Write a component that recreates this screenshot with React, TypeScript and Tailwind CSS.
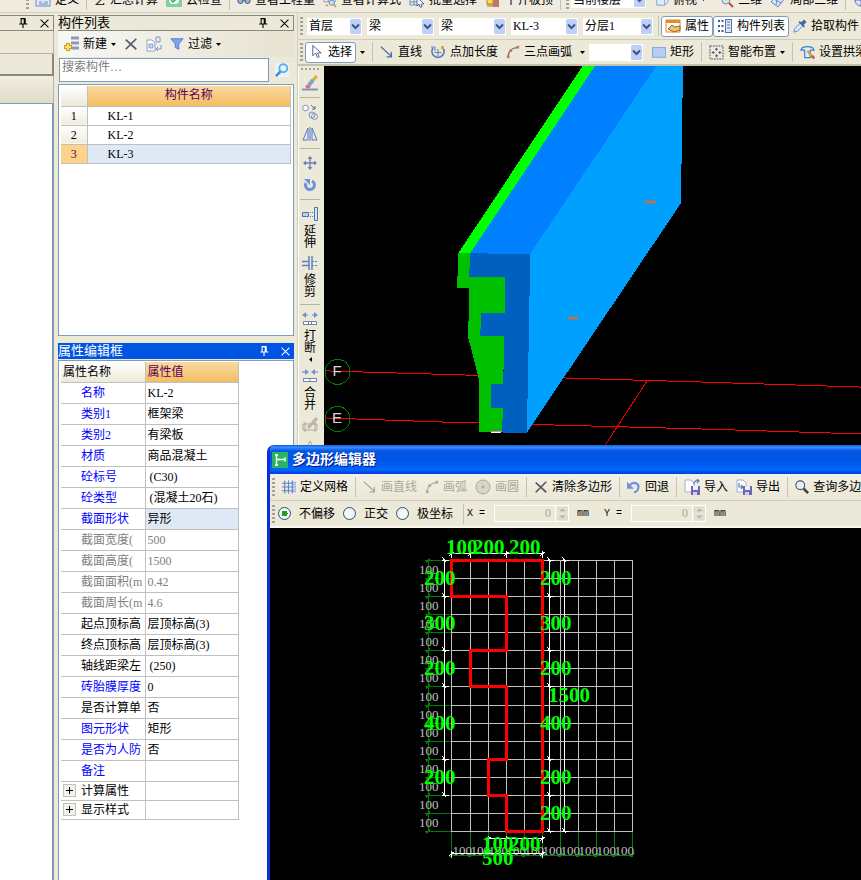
import React from 'react';
import clsx from 'clsx';

interface IconProps {
  children: React.ReactNode;
  className?: string;
}

const Icon = ({ children, className = 'w-4 h-4' }: IconProps) => (
  <svg viewBox="0 0 16 16" className={clsx('shrink-0', className)} fill="none" aria-hidden="true">
    {children}
  </svg>
);

const BLUE = '#4a6ea9';
const GREY = '#aca899';

const LineIcon = ({ color = BLUE }: { color?: string }) => (
  <Icon className="w-[14px] h-4">
    <path d="M1 2l12 11M13 8v5.500H7.500" stroke={color} strokeWidth="1.500" />
  </Icon>
);

const ArcIcon = ({ color = BLUE, dot = '#e06a4c' }: { color?: string; dot?: string }) => (
  <Icon className="w-[14px] h-4">
    <path d="M2.500 13C3 7 7 3 13 3" stroke={color} strokeWidth="1.500" />
    <rect x="1" y="12" width="3" height="3" fill={dot} />
    <rect x="4" y="5" width="3" height="3" fill={dot} />
    <rect x="12" y="1" width="3" height="3" fill={dot} />
  </Icon>
);

const CrossIcon = () => (
  <Icon className="w-[14px] h-4">
    <path d="M2 3l12 11M14 2L2 14" stroke="#5c5c68" strokeWidth="2" />
  </Icon>
);

const FloppyIcon = ({ out = false }: { out?: boolean }) => (
  <Icon>
    <path d="M1 1h6l3 3v9H1z" fill="#fff" stroke="#9fb0cc" />
    <path d={out ? 'M3 4v4h4M5 6l2 2-2 2' : 'M10 5c0-3 2-4 5-3M13 0l2 2-2 2'} stroke="#5a7ab8" strokeWidth="1.200" />
    <rect x="7" y="7" width="9" height="9" fill="#7266b4" />
    <rect x="9" y="7" width="5" height="4" fill="#eef" />
    <rect x="9" y="13" width="4" height="3" fill="#cfcbe8" />
  </Icon>
);

const PinIcon = () => (
  <Icon className="w-[10px] h-[10px]">
    <path d="M4 1h8M5 1v8M10 1v8M11.500 1v8M2 9.500h13M8 10v6" stroke="currentColor" strokeWidth="1.800" />
  </Icon>
);

const CloseIcon = () => (
  <Icon className="w-[9px] h-[9px]">
    <path d="M1 1l14 14M15 1L1 15" stroke="currentColor" strokeWidth="1.800" />
  </Icon>
);

const Caret = () => (
  <svg viewBox="0 0 5 3" className="w-[5px] h-[3px] shrink-0" aria-hidden="true">
    <path d="M0 0h5L2.500 3z" fill="#000" />
  </svg>
);

const Grip = () => (
  <span className="w-[3px] h-[18px] mx-[2px] shrink-0 bg-[repeating-linear-gradient(#a5a294_0_2px,transparent_2px_4px)]" />
);

const Separator = () => <span className="w-px h-5 mx-[3px] shrink-0 bg-[#c5c2b2]" />;

interface ToolButtonProps {
  icon: React.ReactNode;
  label?: string;
  menu?: boolean;
  disabled?: boolean;
  active?: boolean;
}

const ToolButton = ({ icon, label, menu, disabled, active }: ToolButtonProps) => (
  <button
    type="button"
    disabled={disabled}
    className={clsx(
      'flex items-center gap-1 shrink-0 whitespace-nowrap h-[21px]',
      active ? 'px-[3px] bg-white border border-[#7f9db9] rounded-[3px]' : 'px-1',
      disabled && 'text-[#aca899]',
    )}
  >
    {icon}
    {label}
    {menu && <Caret />}
  </button>
);

const DropDown = ({ value, label, className }: { value: string; label: string; className: string }) => (
  <span className={clsx('flex items-center shrink-0 h-[17px] bg-white mr-[5px]', className)}>
    <select aria-label={label} className="appearance-none flex-1 min-w-0 h-full pl-[2px] outline-none">
      <option>{value}</option>
    </select>
    <svg viewBox="0 0 11 15" className="w-[11px] h-[15px] shrink-0 mr-px" aria-hidden="true">
      <rect width="11" height="15" rx="1.500" fill="#bfd0f8" />
      <path d="M2 5.500l3.500 3.500L9 5.500" fill="none" stroke="#3f5480" strokeWidth="2" />
    </svg>
  </span>
);

const TopToolbar = () => (
  <header className="h-[13px] shrink-0 overflow-hidden flex items-end border-b border-[#d0cdbf]">
    <div className="h-[25px] shrink-0 flex items-center pl-6 bg-[#efecdf] min-w-full">
      <Grip />
      <ToolButton label="定义" icon={<Icon><rect x="1" y="2" width="14" height="12" fill="#dfe9fb" stroke="#6d8bc0" /><path d="M4 10h3M9 10h4M4 12h9" stroke="#6d8bc0" /></Icon>} />
      <Separator />
      <ToolButton label="汇总计算" icon={<Icon className="w-3 h-4"><path d="M13 4V2H3l6 6-6 6h10v-2" stroke="#333" strokeWidth="1.500" /></Icon>} />
      <ToolButton label="云检查" icon={<Icon><rect width="16" height="15" rx="1" fill="#7fcf9f" /><rect x="3" y="3" width="10" height="9" rx="4" fill="#f2fff6" /><path d="M5 8l2 2 4-4" stroke="#3aa765" strokeWidth="1.500" /></Icon>} />
      <Separator />
      <ToolButton label="查看工程量" icon={<Icon className="w-[14px] h-4"><circle cx="4" cy="9" r="3" fill="#9db5dd" stroke="#33456b" /><circle cx="12" cy="9" r="3" fill="#9db5dd" stroke="#33456b" /><path d="M6 8h4" stroke="#33456b" /></Icon>} />
      <ToolButton label="查看计算式" icon={<Icon className="w-[14px] h-4"><path d="M1 2h13v8H1zM1 6h13M6 2v8" stroke="#7d93bf" /><circle cx="10" cy="11" r="3" fill="#bfe0f8" stroke="#5a85b8" /><path d="M12 13l3 3M3 14h3" stroke="#d5954a" strokeWidth="2" /></Icon>} />
      <ToolButton label="批量选择" icon={<Icon><path d="M1 2h10v11H1zM1 6h10M1 10h10M5 2v11" stroke="#6d8bc0" /><path d="M8 5l7 7-3 0 1 3-2 0-1-3-2 2z" fill="#fff" stroke="#4a6ea9" /></Icon>} />
      <ToolButton label="平齐板顶" icon={<Icon><path d="M2 8h12v7H2z" fill="#d9a08a" /><path d="M9 8v7M11 6v9M13 7v8" stroke="#a5503a" /><rect x="2" y="5" width="6" height="7" fill="#ffd659" stroke="#b28b1e" /></Icon>} />
      <Separator />
      <Grip />
      <DropDown value="当前楼层" label="楼层范围" className="w-[75px]" />
      <ToolButton label="俯视" menu icon={<Icon className="w-[14px] h-4"><path d="M2 5l4-3h9v8l-4 4H2zM2 5h9v9M11 5l4-3" fill="#dcecf8" stroke="#7f9fc4" /></Icon>} />
      <span className="w-1 shrink-0" />
      <ToolButton label="三维" icon={<Icon><path d="M1 3l7 6 6-5" stroke="#49a764" strokeWidth="2" /><circle cx="8" cy="8" r="4" fill="#cfe9e0" stroke="#6f93a8" /><path d="M11 11l4 4" stroke="#b34d3d" strokeWidth="2" /></Icon>} />
      <ToolButton label="局部三维" icon={<Icon><path d="M1 10l7-8 7 4-7 9zM4 7l7 4M8 2l-2 11" fill="#d2e4f7" stroke="#6d8bc0" /></Icon>} />
      <Separator />
      <ToolButton icon={<Icon><circle cx="8" cy="8" r="6" fill="#dfe5fa" stroke="#5b6fb5" /><path d="M8 2v12M2 8h12" stroke="#5b6fb5" /></Icon>} />
    </div>
  </header>
);

const PanelTitle = ({ title, active }: { title?: string; active?: boolean }) => (
  <div
    className={clsx(
      'flex items-center h-4 shrink-0 text-[13px] leading-4 pr-1 gap-3',
      active ? 'bg-[#0054e3] text-white' : 'border border-l-0 border-[#8b887b] bg-[#ece9d8]',
    )}
  >
    <h2 className="flex-1 whitespace-nowrap">{title}</h2>
    <button type="button" aria-label="固定"><PinIcon /></button>
    <button type="button" aria-label="关闭"><CloseIcon /></button>
  </div>
);

const NavPanel = () => (
  <aside className="w-[54px] shrink-0 flex flex-col pt-[2px]">
    <PanelTitle />
    <div className="h-[23px] shrink-0 border-b border-r border-[#b5b2a3]" />
    <div className="h-[22px] shrink-0 border-b-2 border-r-2 border-[#8b887b]" />
    <div className="h-[27px] shrink-0 bg-gradient-to-b from-[#f1eee2] to-[#dfdbc8] border-r border-[#b5b2a3]" />
    <div className="flex-1 bg-white border-t border-r-2 border-[#7f9db9]" />
  </aside>
);

const MEMBERS = ['KL-1', 'KL-2', 'KL-3'];

const MemberList = () => (
  <section className="shrink-0">
    <PanelTitle title="构件列表" />
    <div className="flex items-center h-[26px] pl-[1px] bg-gradient-to-r from-[#f7f7f4] to-[#e7e3d2]">
      <ToolButton label="新建" menu icon={<Icon><path d="M8 2h8M8 7h8M8 12h8" stroke="#8a9bb8" strokeWidth="3" /><path d="M5 7v8M1 11h8" stroke="#c89a2b" strokeWidth="4" /><path d="M5 8v6M2 11h6" stroke="#ffe26e" strokeWidth="2" /></Icon>} />
      <ToolButton icon={<CrossIcon />} />
      <ToolButton icon={<Icon className="w-4 h-4"><path d="M1 4h5l3 3v8H1z" fill="#fff" stroke="#8aa0c8" /><path d="M3 8h4v4H3z" fill="#c7d3ea" stroke="#8aa0c8" /><path d="M10 1h4v5h-4zM15 9v4h-5M12 11l-2 2 2 2" stroke="#7a90d0" /></Icon>} />
      <ToolButton label="过滤" menu icon={<Icon className="w-[14px] h-4"><path d="M1 2h14l-5 6v6l-4-2V8z" fill="#7fa5ea" stroke="#4a78cf" /></Icon>} />
    </div>
    <div className="flex items-center gap-[6px] h-[25px] pl-px">
      <input
        aria-label="搜索构件"
        placeholder="搜索构件…"
        className="w-[210px] h-6 px-[2px] pb-1 bg-white border border-[#7f9db9] outline-none placeholder:text-[#808080]"
      />
      <button type="button" aria-label="搜索">
        <Icon className="w-[14px] h-[14px]"><rect width="16" height="16" fill="#eaf4fb" /><circle cx="9.500" cy="6" r="4.500" stroke="#5ab0ea" strokeWidth="2.200" /><path d="M6 10l-5 5" stroke="#3c8fd8" strokeWidth="3" /></Icon>
      </button>
    </div>
    <div className="h-[252px] mt-[2px] px-[2px] pt-px bg-white border border-[#7f9db9]">
      <table className="w-full table-fixed border-collapse">
        <thead>
          <tr className="h-5 leading-[15px]">
            <th className="w-[26px] p-0 bg-gradient-to-b from-white to-[#ece9d8] border-r border-b border-[#c0c0c0]" />
            <th className="p-0 font-normal text-[#5b005b] bg-gradient-to-b from-[#f9d9a0] to-[#f3bd60] border-r border-b border-[#c0c0c0]">构件名称</th>
          </tr>
        </thead>
        <tbody>
          {MEMBERS.map((name, i) => {
            const selected = i === 2;
            return (
              <tr key={name} className={clsx('h-[19px]', selected && 'bg-[#dfe8f5]')}>
                <td
                  className={clsx(
                    'p-0 text-center border-r border-b border-[#c0c0c0]',
                    selected ? 'bg-[#ffd28a] text-[#5b005b]' : 'bg-gradient-to-b from-white to-[#efede0]',
                  )}
                >
                  {i + 1}
                </td>
                <td className="p-0 pl-5 border-r border-b border-[#c0c0c0]">{name}</td>
              </tr>
            );
          })}
        </tbody>
      </table>
    </div>
  </section>
);

type Tone = 'blue' | 'black' | 'grey';

const PROPERTIES: { name: string; value: string; tone: Tone }[] = [
  { name: '名称', value: 'KL-2', tone: 'blue' },
  { name: '类别1', value: '框架梁', tone: 'blue' },
  { name: '类别2', value: '有梁板', tone: 'blue' },
  { name: '材质', value: '商品混凝土', tone: 'blue' },
  { name: '砼标号', value: '(C30)', tone: 'blue' },
  { name: '砼类型', value: '(混凝土20石)', tone: 'blue' },
  { name: '截面形状', value: '异形', tone: 'blue' },
  { name: '截面宽度(', value: '500', tone: 'grey' },
  { name: '截面高度(', value: '1500', tone: 'grey' },
  { name: '截面面积(m', value: '0.42', tone: 'grey' },
  { name: '截面周长(m', value: '4.6', tone: 'grey' },
  { name: '起点顶标高', value: '层顶标高(3)', tone: 'black' },
  { name: '终点顶标高', value: '层顶标高(3)', tone: 'black' },
  { name: '轴线距梁左', value: '(250)', tone: 'black' },
  { name: '砖胎膜厚度', value: '0', tone: 'blue' },
  { name: '是否计算单', value: '否', tone: 'black' },
  { name: '图元形状', value: '矩形', tone: 'blue' },
  { name: '是否为人防', value: '否', tone: 'blue' },
  { name: '备注', value: '', tone: 'blue' },
];

const GROUPS = ['计算属性', '显示样式'];

const PropertyEditor = () => (
  <section className="flex-1 min-h-0 flex flex-col mt-[7px]">
    <PanelTitle title="属性编辑框" active />
    <div className="flex-1 min-h-0 mt-px px-[2px] pt-px bg-white border border-b-0 border-[#7f9db9]">
      <table className="w-[178px] table-fixed border-collapse whitespace-nowrap">
        <thead>
          <tr className="h-5 text-left">
            <th className="w-[84px] p-0 pl-[2px] font-normal bg-gradient-to-b from-white to-[#ece9d8] border-r border-b border-[#c0c0c0]">属性名称</th>
            <th className="p-0 pl-[2px] font-normal text-[#5b005b] bg-gradient-to-b from-[#f9d9a0] to-[#f3bd60] border-r border-b border-[#c0c0c0]">属性值</th>
          </tr>
        </thead>
        <tbody>
          {PROPERTIES.map((p) => (
            <tr key={p.name} className="h-[21px]">
              <td
                className={clsx(
                  'p-0 pl-5 overflow-hidden border-r border-b border-[#c0c0c0]',
                  p.tone === 'blue' && 'text-[#0000ff]',
                  p.tone === 'grey' && 'text-[#808080]',
                )}
              >
                {p.name}
              </td>
              <td
                className={clsx(
                  'p-0 border-r border-b border-[#c0c0c0]',
                  p.value.startsWith('(') ? 'pl-1' : 'pl-[2px]',
                  p.tone === 'grey' && 'text-[#808080]',
                  p.value === '异形' && 'bg-[#dfe8f5]',
                )}
              >
                {p.value}
              </td>
            </tr>
          ))}
          {GROUPS.map((g) => (
            <tr key={g} className="h-[19px]">
              <td className="p-0 border-r border-b border-[#c0c0c0]">
                <span className="flex items-center gap-[5px] pl-[2px]">
                  <button type="button" aria-label={`展开${g}`} className="w-[13px] h-[13px] flex items-center justify-center border border-[#c0c0c0] bg-[#f3f3ee]">
                    <svg viewBox="0 0 7 7" className="w-[7px] h-[7px]"><path d="M3.500 0v7M0 3.500h7" stroke="#000" /></svg>
                  </button>
                  {g}
                </span>
              </td>
              <td className="p-0 border-r border-b border-[#c0c0c0]" />
            </tr>
          ))}
        </tbody>
      </table>
    </div>
  </section>
);

const MemberToolbar = () => (
  <div className="flex items-center h-[27px] shrink-0 overflow-hidden border-b border-[#d0cdbf]">
    <Grip />
    <span className="w-[2px] shrink-0" />
    <DropDown value="首层" label="楼层" className="w-[55px]" />
    <DropDown value="梁" label="构件类别" className="w-[67px]" />
    <DropDown value="梁" label="构件类型" className="w-[67px]" />
    <DropDown value="KL-3" label="构件" className="w-[67px]" />
    <DropDown value="分层1" label="分层" className="w-[70px]" />
    <span className="w-px h-5 mr-[2px] shrink-0 bg-[#c5c2b2]" />
    <ToolButton active label="属性" icon={<Icon><rect x="1" y="2" width="14" height="12" fill="#fff" stroke="#e08a2a" /><path d="M1 3.500h14" stroke="#e08a2a" strokeWidth="3" /><path d="M3 11l4-4 3 2 5-1v4l-6 2z" fill="#f3c069" stroke="#7a4b16" strokeWidth=".8" /></Icon>} />
    <ToolButton active label="构件列表" icon={<Icon><path d="M1 3h2M1 8h2M1 13h2M4.500 3h2M4.500 8h2M4.500 13h2" stroke="#3d5a99" strokeWidth="2" /><rect x="8.500" y="1.500" width="6" height="13" fill="#dbe6fb" stroke="#5673b0" /><path d="M10 4h3M10 7h3M10 10h3" stroke="#5673b0" /></Icon>} />
    <ToolButton label="拾取构件" icon={<Icon className="w-[14px] h-4"><path d="M1 15l1-4 7-7 3 3-7 7z" fill="#d7ebfa" stroke="#4c86c4" /><path d="M7 3l6 6" stroke="#3a6ba8" strokeWidth="2" /><path d="M10 6l4-4" stroke="#3a6ba8" strokeWidth="4" /></Icon>} />
  </div>
);

const DrawToolbar = () => (
  <div className="flex items-center h-[26px] shrink-0 overflow-hidden border-b-2 border-[#c5c2b2]">
    <Grip />
    <ToolButton active label="选择" icon={<Icon className="w-[15px] h-4"><path d="M4 1v11l3-3 2 5 2-1-2-4h4z" fill="#fff" stroke="#4a5f86" /></Icon>} />
    <button type="button" aria-label="选择方式" className="px-1"><Caret /></button>
    <Separator />
    <ToolButton label="直线" icon={<LineIcon />} />
    <ToolButton label="点加长度" icon={<Icon><path d="M3 4a6 6 0 1 0 10 0" stroke="#5b7fc0" strokeWidth="1.800" /><path d="M1 3h4v4M8 5v7M4.500 8.500h7" stroke="#5b7fc0" /><rect x="11" y="2" width="3" height="3" fill="#e0a04c" /></Icon>} />
    <ToolButton label="三点画弧" icon={<ArcIcon />} />
    <button type="button" aria-label="更多画弧" className="px-1"><Caret /></button>
    <DropDown value="" label="弧参数" className="w-[54px]" />
    <ToolButton label="矩形" icon={<Icon className="w-[14px] h-4"><rect x="0.500" y="3" width="15" height="11" fill="#b8cdf5" stroke="#7f9fd8" /></Icon>} />
    <Separator />
    <ToolButton label="智能布置" menu icon={<Icon className="w-[15px] h-[15px]"><rect x="1" y="1" width="14" height="14" stroke="#7b88a3" strokeWidth="1.500" strokeDasharray="2 1" /><path d="M8 3v3M6.500 4.500h3M8 10v3M6.500 11.500h3M3 8h3M4.500 6.500v3M10 8h3M11.500 6.500v3" stroke="#3c5078" /></Icon>} />
    <Separator />
    <ToolButton label="设置拱梁" icon={<Icon className="w-[15px] h-4"><path d="M1 6c1-5 13-5 14 0h-4v8H5V6z" fill="#d9ecfa" stroke="#3f7fc0" strokeWidth="1.200" /><path d="M8 7l6 7" stroke="#e09a32" strokeWidth="2.500" /><path d="M13 12l2 3" stroke="#c0584a" strokeWidth="2.500" /></Icon>} />
  </div>
);

const SideTool = ({ label, text, menu, icon }: { label: string; text?: boolean; menu?: boolean; icon: React.ReactNode }) => (
  <button
    type="button"
    aria-label={label}
    className={clsx('flex flex-col items-center shrink-0 w-[23px]', text ? 'gap-[3px] py-[3px]' : 'justify-center h-[22px]')}
  >
    {icon}
    {text && <span className="w-3 leading-3 break-all">{label}</span>}
    {menu && <svg viewBox="0 0 3 5" className="w-[3px] h-[5px]"><path d="M3 0v5L0 2.500z" fill="#000" /></svg>}
  </button>
);

const SideSeparator = () => <span className="w-5 h-px my-[3px] shrink-0 bg-[#b8b5a5]" />;

const EditToolbar = () => (
  <div className="w-[26px] pr-[3px] shrink-0 flex flex-col items-center overflow-hidden border-l border-white">
    <span className="w-[18px] h-[2px] my-[2px] shrink-0 bg-[repeating-linear-gradient(90deg,#a5a294_0_2px,transparent_2px_4px)]" />
    <SideTool label="删除" icon={<Icon><path d="M0 14.500h16" stroke="#7c95bd" strokeWidth="2" /><path d="M15 1l-5 5" stroke="#dcae3d" strokeWidth="3" /><path d="M11 5l-4 5" stroke="#8aa0c8" strokeWidth="4" /><ellipse cx="6" cy="11.500" rx="2.500" ry="2" fill="#e2679a" /></Icon>} />
    <SideSeparator />
    <SideTool label="复制" icon={<Icon><circle cx="3.500" cy="4" r="2.800" fill="#fff" stroke="#7b93bf" /><path d="M9 1l4 4M13 2v3h-3" stroke="#4a6ea9" /><circle cx="10" cy="11" r="3" stroke="#7b93bf" /><circle cx="12.500" cy="12.500" r="3" stroke="#7b93bf" /></Icon>} />
    <SideTool label="镜像" icon={<Icon><path d="M6 2v12H1zM10 2v12h5z" fill="#dceafb" stroke="#5a7ab8" /><path d="M8 1v14" stroke="#5a7ab8" /></Icon>} />
    <SideSeparator />
    <SideTool label="移动" icon={<Icon><path d="M8 2v12M2 8h12" stroke="#6581b3" strokeWidth="1.300" /><path d="M8 1l2.500 3h-5zM8 15l2.500-3h-5zM1 8l3-2.500v5zM15 8l-3-2.500v5z" fill="#6581b3" /></Icon>} />
    <SideTool label="旋转" icon={<Icon><path d="M4 6a4.500 4.500 0 1 0 6-2" stroke="#6d93dc" strokeWidth="3" /><path d="M2 2h6v6z" fill="#6d93dc" /></Icon>} />
    <SideSeparator />
    <SideTool label="延伸" text icon={<Icon><path d="M0.500 6.500h6v4h-6z" fill="#b9d4ee" stroke="#4a77a8" /><path d="M8 6.500h4M8 10.500h4" stroke="#4a77a8" strokeDasharray="1 1" /><path d="M12.500 1.500h3v13h-3z" fill="#d5e6f7" stroke="#4a77a8" /></Icon>} />
    <SideTool label="修剪" text icon={<Icon><path d="M7 1v14M10 1v14M0 6.500h7M0 10.500h7" stroke="#5b82c0" strokeWidth="1.500" /><path d="M10 6.500h6M10 10.500h6" stroke="#5b82c0" strokeDasharray="2 1" /></Icon>} />
    <SideSeparator />
    <SideTool label="打断" text menu icon={<Icon><path d="M1 4h5M10 4h5" stroke="#5b82d0" /><path d="M0 4l4-3v6zM16 4l-4-3v6z" fill="#6f94dc" /><path d="M1.500 10.500h5v3h-5zM6.500 10.500h3v3h-3zM9.500 10.500h5v3h-5z" fill="#fff" stroke="#6b83ad" /></Icon>} />
    <SideTool label="合并" text icon={<Icon><path d="M0 4h4M12 4h4" stroke="#5b82d0" /><path d="M7 4L3 1v6zM9 4l4-3v6z" fill="#6f94dc" /><path d="M1.500 10.500h13v3h-13zM8 10v4" fill="#fff" stroke="#6b83ad" /></Icon>} />
    <SideTool label="分割" icon={<Icon><path d="M1 7h14v6H1zM3 5v10M13 5v10" stroke={GREY} /><path d="M15 1L6 11" stroke="#b8b5a5" strokeWidth="3" /></Icon>} />
    <SideTool label="对齐" icon={<Icon><path d="M8 2L3 12h10z" stroke={GREY} /></Icon>} />
  </div>
);

// Coordinates are in workspace pixels, the viewBox origin is the canvas corner
const Scene = () => (
  <svg
    viewBox="324 67 537 813"
    preserveAspectRatio="xMinYMin slice"
    className="flex-1 min-w-0 h-full bg-black"
    shapeRendering="crispEdges"
    role="img"
    aria-label="三维视图"
  >
    <g stroke="#f00" fill="none">
      <path d="M325 371.500L700 382.600 861 387.700" />
      <path d="M325 418.500L440 422.500 700 429.500 861 434.500" />
      <path d="M647 381L604 447" />
    </g>
    <g stroke="#008000" fill="none">
      <circle cx="337.500" cy="372.500" r="12.500" />
      <circle cx="337.500" cy="419.500" r="12.500" />
    </g>
    <g fill="#d8d8d8" fontSize="15" fontFamily="Liberation Sans, sans-serif" textAnchor="middle">
      <text x="337" y="377">F</text>
      <text x="337" y="424">E</text>
    </g>
    <path d="M583 66h13L470.500 254H458z" fill="#0f0" />
    <path d="M595.500 66H657L530 256 470 254z" fill="#0080ff" />
    <path d="M656.500 66H683L682 101 680.500 204 526 434 529 256z" fill="#00a0ff" />
    <path d="M470 254l60 1-1 57-1 55-1.500 67-25-1 1.500-24H491V385h12l1-47-24-1 1-23h24v-36h-36z" fill="#0060c0" />
    <path d="M458 254h12l-1 24h36v36h-24l-1 23h24l-1 48h-12v24h12l-1.500 24H479v-52l-11-43 1-49h-12z" fill="#00c000" />
    <path d="M491 432.500h11" stroke="#f6f" />
    <path d="M491 433.500h10" stroke="#fff" />
    <path d="M645 202.500h11M568 318.500h10" stroke="#ff6000" strokeWidth="2" />
  </svg>
);

const GRID_X = [451.5, 470.5, 488.5, 506.5, 524.5, 542.5, 560.5, 578.5, 596.5, 614.5, 632.5];
const GRID_Y = [560.5, 578.5, 596.5, 614.5, 632.5, 650.5, 668.5, 686.5, 705.5, 723.5, 741.5, 759.5, 777.5, 795.5, 813.5, 831.5];
const LEFT_TICKS = [560.5, 596.5, 650.5, 686.5, 759.5, 795.5];

const DIMENSIONS: [number, number, string][] = [
  [446, 554, '100'],
  [473, 554, '200'],
  [509, 554, '200'],
  [424, 585, '200'],
  [424, 630, '300'],
  [424, 675, '200'],
  [424, 730, '400'],
  [424, 784, '200'],
  [540, 585, '200'],
  [540, 630, '300'],
  [540, 675, '200'],
  [548, 702, '1500'],
  [540, 730, '400'],
  [540, 784, '200'],
  [540, 820, '200'],
  [482, 851, '100'],
  [509, 851, '200'],
  [482, 865, '500'],
];

const tickH = (x: number, y: number) => `M${x - 3} ${y}h7M${x - 2} ${y - 3}l4 5`;
const tickV = (x: number, y: number) => `M${x} ${y - 3}v7M${x - 2} ${y + 2}l5 -4`;

const SectionDrawing = () => (
  <svg
    viewBox="270 528 591 352"
    preserveAspectRatio="xMinYMin slice"
    className="flex-1 min-h-0 w-full bg-black"
    shapeRendering="crispEdges"
    role="img"
    aria-label="截面图"
  >
    <g stroke="#c0c0c0">
      {GRID_X.map((x) => <path key={x} d={`M${x} 560V832`} />)}
      {GRID_Y.map((y) => <path key={y} d={`M451 ${y}H633`} />)}
    </g>
    <g stroke="#008000">
      <path d="M428.500 560V832M451 855.500H633" />
      {GRID_Y.map((y) => <path key={y} d={`M425 ${y}H451M426 ${y + 2}l4 -4`} />)}
      {GRID_X.map((x) => <path key={x} d={`M${x} 832V857M${x - 2} 857l4 -4`} />)}
    </g>
    <g fill="#c0c0c0" fontSize="13" fontFamily="Liberation Serif, serif">
      {GRID_Y.slice(1).map((y) => <text key={y} x="419" y={y - 5}>100</text>)}
      {GRID_X.slice(1).map((x) => <text key={x} x={x - 18} y="855">100</text>)}
    </g>
    <g stroke="#fff" fill="none">
      <path d="M444.500 560V796M549.500 560V832M564.500 560V832M451 553.500H543M488 838.500H543M451 853.500H543" />
      {LEFT_TICKS.map((y) => <path key={y} d={tickH(444.5, y)} />)}
      {[...LEFT_TICKS, 831.5].map((y) => <path key={y} d={tickH(549.5, y)} />)}
      {[560.5, 831.5].map((y) => <path key={y} d={tickH(564.5, y)} />)}
      {[451.5, 470.5, 506.5, 542.5].map((x) => <path key={x} d={tickV(x, 553.5)} />)}
      {[488.5, 506.5, 542.5].map((x) => <path key={x} d={tickV(x, 838.5)} />)}
      {[451.5, 542.5].map((x) => <path key={x} d={tickV(x, 853.5)} />)}
    </g>
    <path
      d="M451.500 560.500H542.500V831.500H506.500V795.500H488.500V759.500H506.500V686.500H470.500V650.500H506.500V596.500H451.500z"
      fill="none"
      stroke="#f00"
      strokeWidth="3"
    />
    <g fill="#0f0" fontSize="21" fontWeight="700" fontFamily="Liberation Serif, serif">
      {DIMENSIONS.map(([x, y, text]) => <text key={`${x}-${y}`} x={x} y={y}>{text}</text>)}
    </g>
  </svg>
);

const Offset = ({ label }: { label: string }) => (
  <label className="flex items-center shrink-0 whitespace-pre font-['Liberation_Mono',monospace] text-[10px]">
    <span className="w-[27px]">{`${label} =`}</span>
    <span className="flex items-center h-[17px] border border-white">
      <input
        defaultValue="0"
        disabled
        className="w-[60px] h-full pr-1 text-right text-[12px] font-['Liberation_Serif',serif] text-[#aca899] bg-[#ece9d8]"
      />
      <svg viewBox="0 0 13 15" className="w-[13px] h-[15px] border-l border-white" aria-hidden="true">
        <rect x="1" width="12" height="7" rx="1" fill="#e0ded2" />
        <rect x="1" y="8" width="12" height="7" rx="1" fill="#e0ded2" />
        <path d="M4 5l3-3 3 3zM4 10l3 3 3-3z" fill="#b3b0a2" />
      </svg>
    </span>
    <span className="w-[35px] pl-2">mm</span>
  </label>
);

const MODES = ['不偏移', '正交', '极坐标'];

const PolygonEditor = () => (
  <section
    role="dialog"
    aria-label="多边形编辑器"
    className="absolute left-[267px] right-0 top-[445px] bottom-0 flex flex-col overflow-hidden rounded-tl-[7px] border-l-[3px] border-[#0831d9] bg-[#ece9d8]"
  >
    <div className="flex items-center gap-1 h-[29px] shrink-0 pl-[2px] bg-[linear-gradient(#0a5be0,#3a8cff_8%,#0558e6_20%,#0054e3_50%,#0066ff_85%,#003dd7)] text-white">
      <Icon><rect width="16" height="16" fill="#28b463" /><path d="M4.500 2v12M5 7.500h8M13 5.500v4M3 3h3M3 13h3" stroke="#fff" strokeWidth="1.500" /></Icon>
      <h1 className="text-[14px] leading-4 font-bold [text-shadow:1px_1px_#00138c]">多边形编辑器</h1>
    </div>
    <div className="flex items-center h-[27px] shrink-0 overflow-hidden border-b border-[#d0cdbf] bg-gradient-to-b from-[#f2f0e6] to-[#ebe8d7]">
      <Grip />
      <ToolButton label="定义网格" icon={<Icon className="w-[15px] h-4"><path d="M4 1v14M8 1v14M12 1v14M1 4h12M1 8h12M1 12h12" stroke="#5b82d0" strokeWidth="1.200" /><path d="M13 3h3v2h-3zM13 7h3v2h-3zM13 11h3v2h-3z" fill="#fff" stroke="#5b82d0" strokeWidth=".7" /></Icon>} />
      <Separator />
      <ToolButton disabled label="画直线" icon={<LineIcon color={GREY} />} />
      <ToolButton disabled label="画弧" icon={<ArcIcon color={GREY} dot={GREY} />} />
      <ToolButton disabled label="画圆" icon={<Icon className="w-4 h-4"><circle cx="8" cy="8" r="7" fill="#d9d6c7" stroke={GREY} /><circle cx="8" cy="8" r="1.500" fill={GREY} /></Icon>} />
      <Separator />
      <ToolButton label="清除多边形" icon={<CrossIcon />} />
      <Separator />
      <ToolButton label="回退" icon={<Icon className="w-[14px] h-4"><path d="M3 6c5-5 11-2 10 3-.500 3-3 5-5 5" stroke="#6d93dc" strokeWidth="2.500" /><path d="M0 2v8h8z" fill="#6d93dc" /></Icon>} />
      <Separator />
      <ToolButton label="导入" icon={<FloppyIcon />} />
      <ToolButton label="导出" icon={<FloppyIcon out />} />
      <Separator />
      <ToolButton label="查询多边形" icon={<Icon className="w-[14px] h-4"><circle cx="6" cy="6" r="5" fill="#e5f3fb" stroke="#4d5560" strokeWidth="1.300" /><path d="M10 10l5 5" stroke="#3f444c" strokeWidth="3" /></Icon>} />
    </div>
    <div className="flex items-center h-[27px] shrink-0 overflow-hidden border-b-2 border-[#f8f7f2]">
      <Grip />
      {MODES.map((mode, i) => (
        <label key={mode} className="flex items-center gap-2 shrink-0 pl-px mr-[7px]">
          <input
            type="radio"
            name="mode"
            defaultChecked={i === 0}
            className="appearance-none w-[13px] h-[13px] rounded-full border border-[#1d5281] bg-[#f6f6f2] checked:bg-[radial-gradient(#21a121_0_3px,#f6f6f2_3px)]"
          />
          {mode}
        </label>
      ))}
      <Separator />
      <Offset label="X" />
      <Offset label="Y" />
    </div>
    <SectionDrawing />
  </section>
);

export default function App() {
  return (
    <div className="relative flex flex-col h-screen w-full overflow-hidden bg-[#ece9d8] text-black text-[12px] leading-4 font-['Liberation_Serif','Noto_Sans_CJK_SC',serif]">
      <TopToolbar />
      <main className="flex flex-1 min-h-0">
        <NavPanel />
        <div className="w-[236px] shrink-0 ml-1 pt-[2px] flex flex-col">
          <MemberList />
          <PropertyEditor />
        </div>
        <div className="flex-1 min-w-0 ml-[3px] flex flex-col border-l border-[#d0cdbf]">
          <MemberToolbar />
          <DrawToolbar />
          <div className="flex flex-1 min-h-0">
            <EditToolbar />
            <Scene />
          </div>
        </div>
      </main>
      <PolygonEditor />
    </div>
  );
}
